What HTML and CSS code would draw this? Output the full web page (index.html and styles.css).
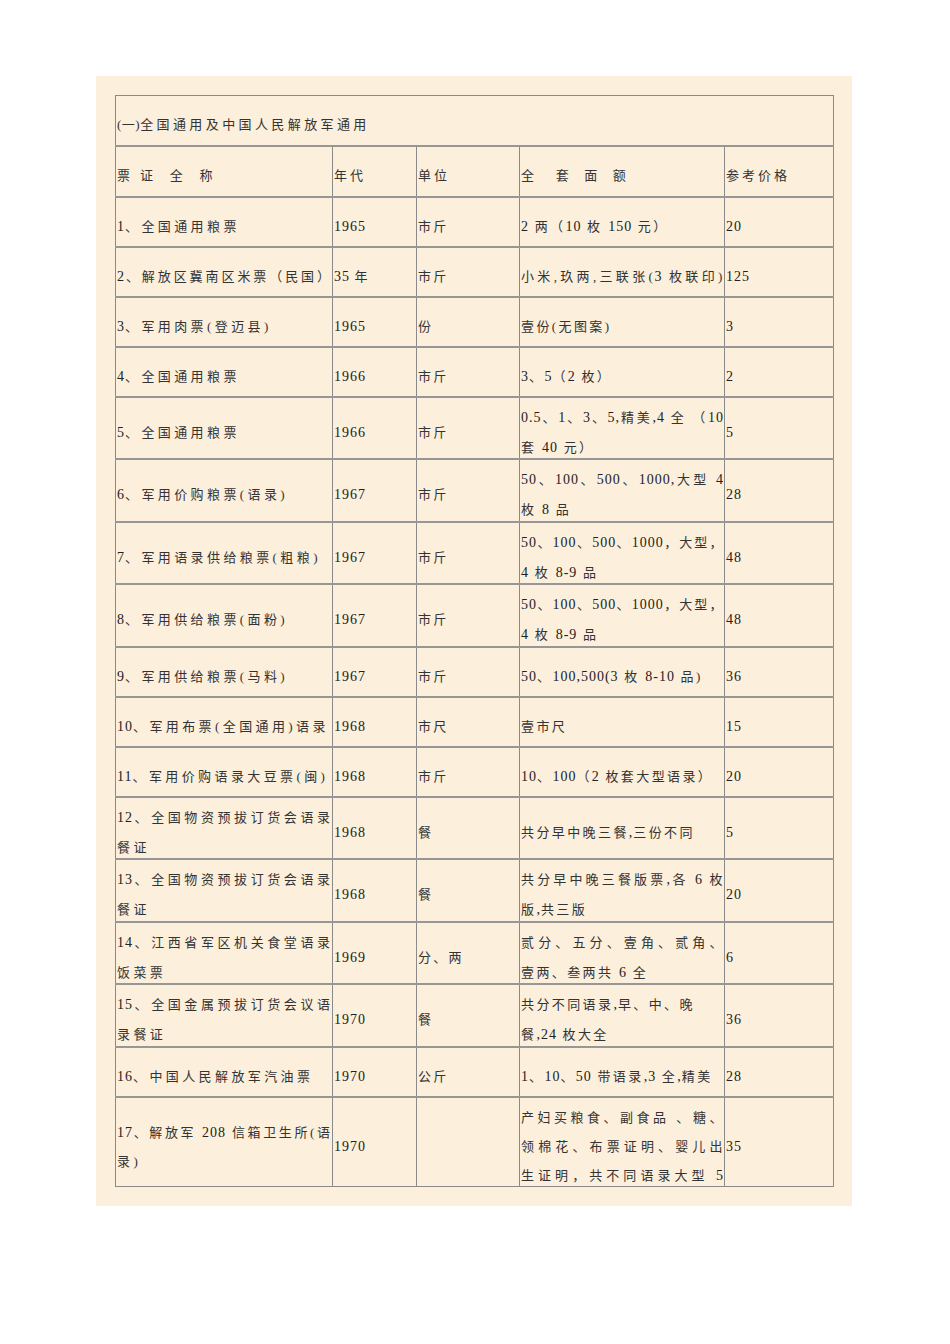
FILE: index.html
```html
<!DOCTYPE html>
<html lang="zh-CN">
<head>
<meta charset="utf-8">
<title>票证参考价格</title>
<link rel="stylesheet" href="styles.css">
</head>
<body>
<div class="page">
  <div class="sheet">
    <table class="grid">
      <colgroup>
        <col class="w1"><col class="w2"><col class="w3"><col class="w4"><col class="w5">
      </colgroup>
      <tr class="title s">
        <td colspan="5" class="a"><div class="c"><span class="k">(一)</span>全国通用及中国人民解放军通用</div></td>
      </tr>
      <tr class="head">
        <td class="a"><div class="c">票 证&nbsp; 全&nbsp; 称</div></td>
        <td><div class="c">年代</div></td>
        <td><div class="c">单位</div></td>
        <td><div class="c">全&nbsp;&nbsp; 套&nbsp; 面&nbsp; 额</div></td>
        <td><div class="c">参考价格</div></td>
      </tr>
      <tr class="s">
        <td class="a"><div class="c"><span class="n">1</span>、全国通用粮票</div></td>
        <td class="y"><div class="c">1965</div></td>
        <td class="u"><div class="c">市斤</div></td>
        <td class="v"><div class="c"><span class="n">2</span> 两（<span class="n">10</span> 枚 <span class="n">150</span> 元）</div></td>
        <td class="p"><div class="c">20</div></td>
      </tr>
      <tr class="s">
        <td class="a"><div class="c"><span class="j"><span class="n">2</span>、解放区冀南区米票（民国）</span></div></td>
        <td class="y"><div class="c">35 <span class="h">年</span></div></td>
        <td class="u"><div class="c">市斤</div></td>
        <td class="v"><div class="c"><span class="j">小米,玖两,三联张(<span class="n">3</span> 枚联印)</span></div></td>
        <td class="p"><div class="c">125</div></td>
      </tr>
      <tr class="s">
        <td class="a"><div class="c"><span class="n">3</span>、军用肉票(登迈县)</div></td>
        <td class="y"><div class="c">1965</div></td>
        <td class="u"><div class="c">份</div></td>
        <td class="v"><div class="c">壹份(无图案)</div></td>
        <td class="p"><div class="c">3</div></td>
      </tr>
      <tr class="s">
        <td class="a"><div class="c"><span class="n">4</span>、全国通用粮票</div></td>
        <td class="y"><div class="c">1966</div></td>
        <td class="u"><div class="c">市斤</div></td>
        <td class="v"><div class="c"><span class="n">3</span>、<span class="n">5</span>（<span class="n">2</span> 枚）</div></td>
        <td class="p"><div class="c">2</div></td>
      </tr>
      <tr class="d">
        <td class="a"><div class="c"><span class="n">5</span>、全国通用粮票</div></td>
        <td class="y"><div class="c">1966</div></td>
        <td class="u"><div class="c">市斤</div></td>
        <td class="v"><div class="c"><span class="j"><span class="n">0.5</span>、<span class="n">1</span>、<span class="n">3</span>、<span class="n">5,</span>精美<span class="n">,4</span> 全 （<span class="n">10</span></span>套 <span class="n">40</span> 元）</div></td>
        <td class="p"><div class="c">5</div></td>
      </tr>
      <tr class="d">
        <td class="a"><div class="c"><span class="n">6</span>、军用价购粮票(语录)</div></td>
        <td class="y"><div class="c">1967</div></td>
        <td class="u"><div class="c">市斤</div></td>
        <td class="v"><div class="c"><span class="j"><span class="n">50</span>、<span class="n">100</span>、<span class="n">500</span>、<span class="n">1000,</span>大型 <span class="n">4</span></span>枚 <span class="n">8</span> 品</div></td>
        <td class="p"><div class="c">28</div></td>
      </tr>
      <tr class="d">
        <td class="a"><div class="c"><span class="n">7</span>、军用语录供给粮票(粗粮)</div></td>
        <td class="y"><div class="c">1967</div></td>
        <td class="u"><div class="c">市斤</div></td>
        <td class="v"><div class="c"><span class="j"><span class="n">50</span>、<span class="n">100</span>、<span class="n">500</span>、<span class="n">1000</span>，大型，</span><span class="n">4</span> 枚 <span class="n">8-9</span> 品</div></td>
        <td class="p"><div class="c">48</div></td>
      </tr>
      <tr class="d">
        <td class="a"><div class="c"><span class="n">8</span>、军用供给粮票(面粉)</div></td>
        <td class="y"><div class="c">1967</div></td>
        <td class="u"><div class="c">市斤</div></td>
        <td class="v"><div class="c"><span class="j"><span class="n">50</span>、<span class="n">100</span>、<span class="n">500</span>、<span class="n">1000</span>，大型，</span><span class="n">4</span> 枚 <span class="n">8-9</span> 品</div></td>
        <td class="p"><div class="c">48</div></td>
      </tr>
      <tr class="s">
        <td class="a"><div class="c"><span class="n">9</span>、军用供给粮票(马料)</div></td>
        <td class="y"><div class="c">1967</div></td>
        <td class="u"><div class="c">市斤</div></td>
        <td class="v"><div class="c"><span class="n">50</span>、<span class="n">100,500(3</span> 枚 <span class="n">8-10</span> 品)</div></td>
        <td class="p"><div class="c">36</div></td>
      </tr>
      <tr class="s">
        <td class="a"><div class="c"><span class="n">10</span>、军用布票(全国通用)语录</div></td>
        <td class="y"><div class="c">1968</div></td>
        <td class="u"><div class="c">市尺</div></td>
        <td class="v"><div class="c">壹市尺</div></td>
        <td class="p"><div class="c">15</div></td>
      </tr>
      <tr class="s">
        <td class="a"><div class="c"><span class="n">11</span>、军用价购语录大豆票(闽)</div></td>
        <td class="y"><div class="c">1968</div></td>
        <td class="u"><div class="c">市斤</div></td>
        <td class="v"><div class="c"><span class="n">10</span>、<span class="n">100</span>（<span class="n">2</span> 枚套大型语录）</div></td>
        <td class="p"><div class="c">20</div></td>
      </tr>
      <tr class="d">
        <td class="a"><div class="c"><span class="j"><span class="n">12</span>、全国物资预拔订货会语录</span>餐证</div></td>
        <td class="y"><div class="c">1968</div></td>
        <td class="u"><div class="c">餐</div></td>
        <td class="v"><div class="c">共分早中晚三餐<span class="n">,</span>三份不同</div></td>
        <td class="p"><div class="c">5</div></td>
      </tr>
      <tr class="d">
        <td class="a"><div class="c"><span class="j"><span class="n">13</span>、全国物资预拔订货会语录</span>餐证</div></td>
        <td class="y"><div class="c">1968</div></td>
        <td class="u"><div class="c">餐</div></td>
        <td class="v"><div class="c"><span class="j">共分早中晚三餐版票<span class="n">,</span>各 <span class="n">6</span> 枚</span>版<span class="n">,</span>共三版</div></td>
        <td class="p"><div class="c">20</div></td>
      </tr>
      <tr class="d">
        <td class="a"><div class="c"><span class="j"><span class="n">14</span>、江西省军区机关食堂语录</span>饭菜票</div></td>
        <td class="y"><div class="c">1969</div></td>
        <td class="u"><div class="c">分、两</div></td>
        <td class="v"><div class="c"><span class="j">贰分、五分、壹角、贰角、</span>壹两、叁两共 <span class="n">6</span> 全</div></td>
        <td class="p"><div class="c">6</div></td>
      </tr>
      <tr class="d">
        <td class="a"><div class="c"><span class="j"><span class="n">15</span>、全国金属预拔订货会议语</span>录餐证</div></td>
        <td class="y"><div class="c">1970</div></td>
        <td class="u"><div class="c">餐</div></td>
        <td class="v"><div class="c">共分不同语录<span class="n">,</span>早、中、晚<br>餐<span class="n">,24</span> 枚大全</div></td>
        <td class="p"><div class="c">36</div></td>
      </tr>
      <tr class="s">
        <td class="a"><div class="c"><span class="n">16</span>、中国人民解放军汽油票</div></td>
        <td class="y"><div class="c">1970</div></td>
        <td class="u"><div class="c">公斤</div></td>
        <td class="v"><div class="c"><span class="n">1</span>、<span class="n">10</span>、<span class="n">50</span> 带语录<span class="n">,3</span> 全<span class="n">,</span>精美</div></td>
        <td class="p"><div class="c">28</div></td>
      </tr>
      <tr class="t">
        <td class="a"><div class="c"><span class="j"><span class="n">17</span>、解放军 <span class="n">208</span> 信箱卫生所(语</span>录)</div></td>
        <td class="y"><div class="c">1970</div></td>
        <td class="u"><div class="c"></div></td>
        <td class="v"><div class="c"><span class="j">产妇买粮食、副食品 、糖、</span><span class="j">领棉花、布票证明、婴儿出</span><span class="j">生证明，共不同语录大型 <span class="n">5</span></span></div></td>
        <td class="p"><div class="c">35</div></td>
      </tr>
    </table>
  </div>
</div>
</body>
</html>
```

FILE: styles.css
```css
html, body {
  margin: 0;
  padding: 0;
  background: #ffffff;
}

body {
  font-family: "Liberation Serif", "Noto Sans CJK SC", serif;
  font-size: 13px;
  color: #333333;
}

.page {
  padding: 76px 0 0 96px;
}

.sheet {
  width: 718px;
  padding: 19px;
  background: #fcefdc;
}

.grid {
  width: 718px;
  table-layout: fixed;
  border-collapse: collapse;
}

.w1 { width: 217px; }
.w2 { width: 84px; }
.w3 { width: 103px; }
.w4 { width: 205px; }
.w5 { width: 109px; }

.grid td {
  border-left: 1px solid #8a8a8a;
  border-right: 1px solid #8a8a8a;
  border-top: 2px solid #979797;
  border-bottom: 2px solid #979797;
  padding: 0 0 0 1px;
  vertical-align: middle;
  letter-spacing: 3px;
  overflow: hidden;
}

.grid tr.title td {
  border-top: 1px solid #8a8a8a;
}

.grid tr.t td {
  border-bottom: 1px solid #8a8a8a;
}

.s { height: 50px; }
.head { height: 51px; }
.d { height: 62.5px; }
.t { height: 90px; }

.c {
  line-height: 30px;
  margin: 5px 0 -5px;
}

.t .c {
  line-height: 29px;
}

.grid td.a { letter-spacing: 3.4px; }
.grid td.u { letter-spacing: 2.2px; }
.grid td.v { letter-spacing: 2.4px; }

.grid td.y,
.grid td.p,
.n {
  font-size: 14px;
  letter-spacing: 1px;
  color: #222222;
}

.h {
  font-size: 13px;
  color: #333333;
}

.k {
  letter-spacing: 0.5px;
}

.j {
  display: block;
  text-align: justify;
  text-align-last: justify;
  letter-spacing: 1.6px;
}

.grid td.a .j { letter-spacing: 2px; }
```
